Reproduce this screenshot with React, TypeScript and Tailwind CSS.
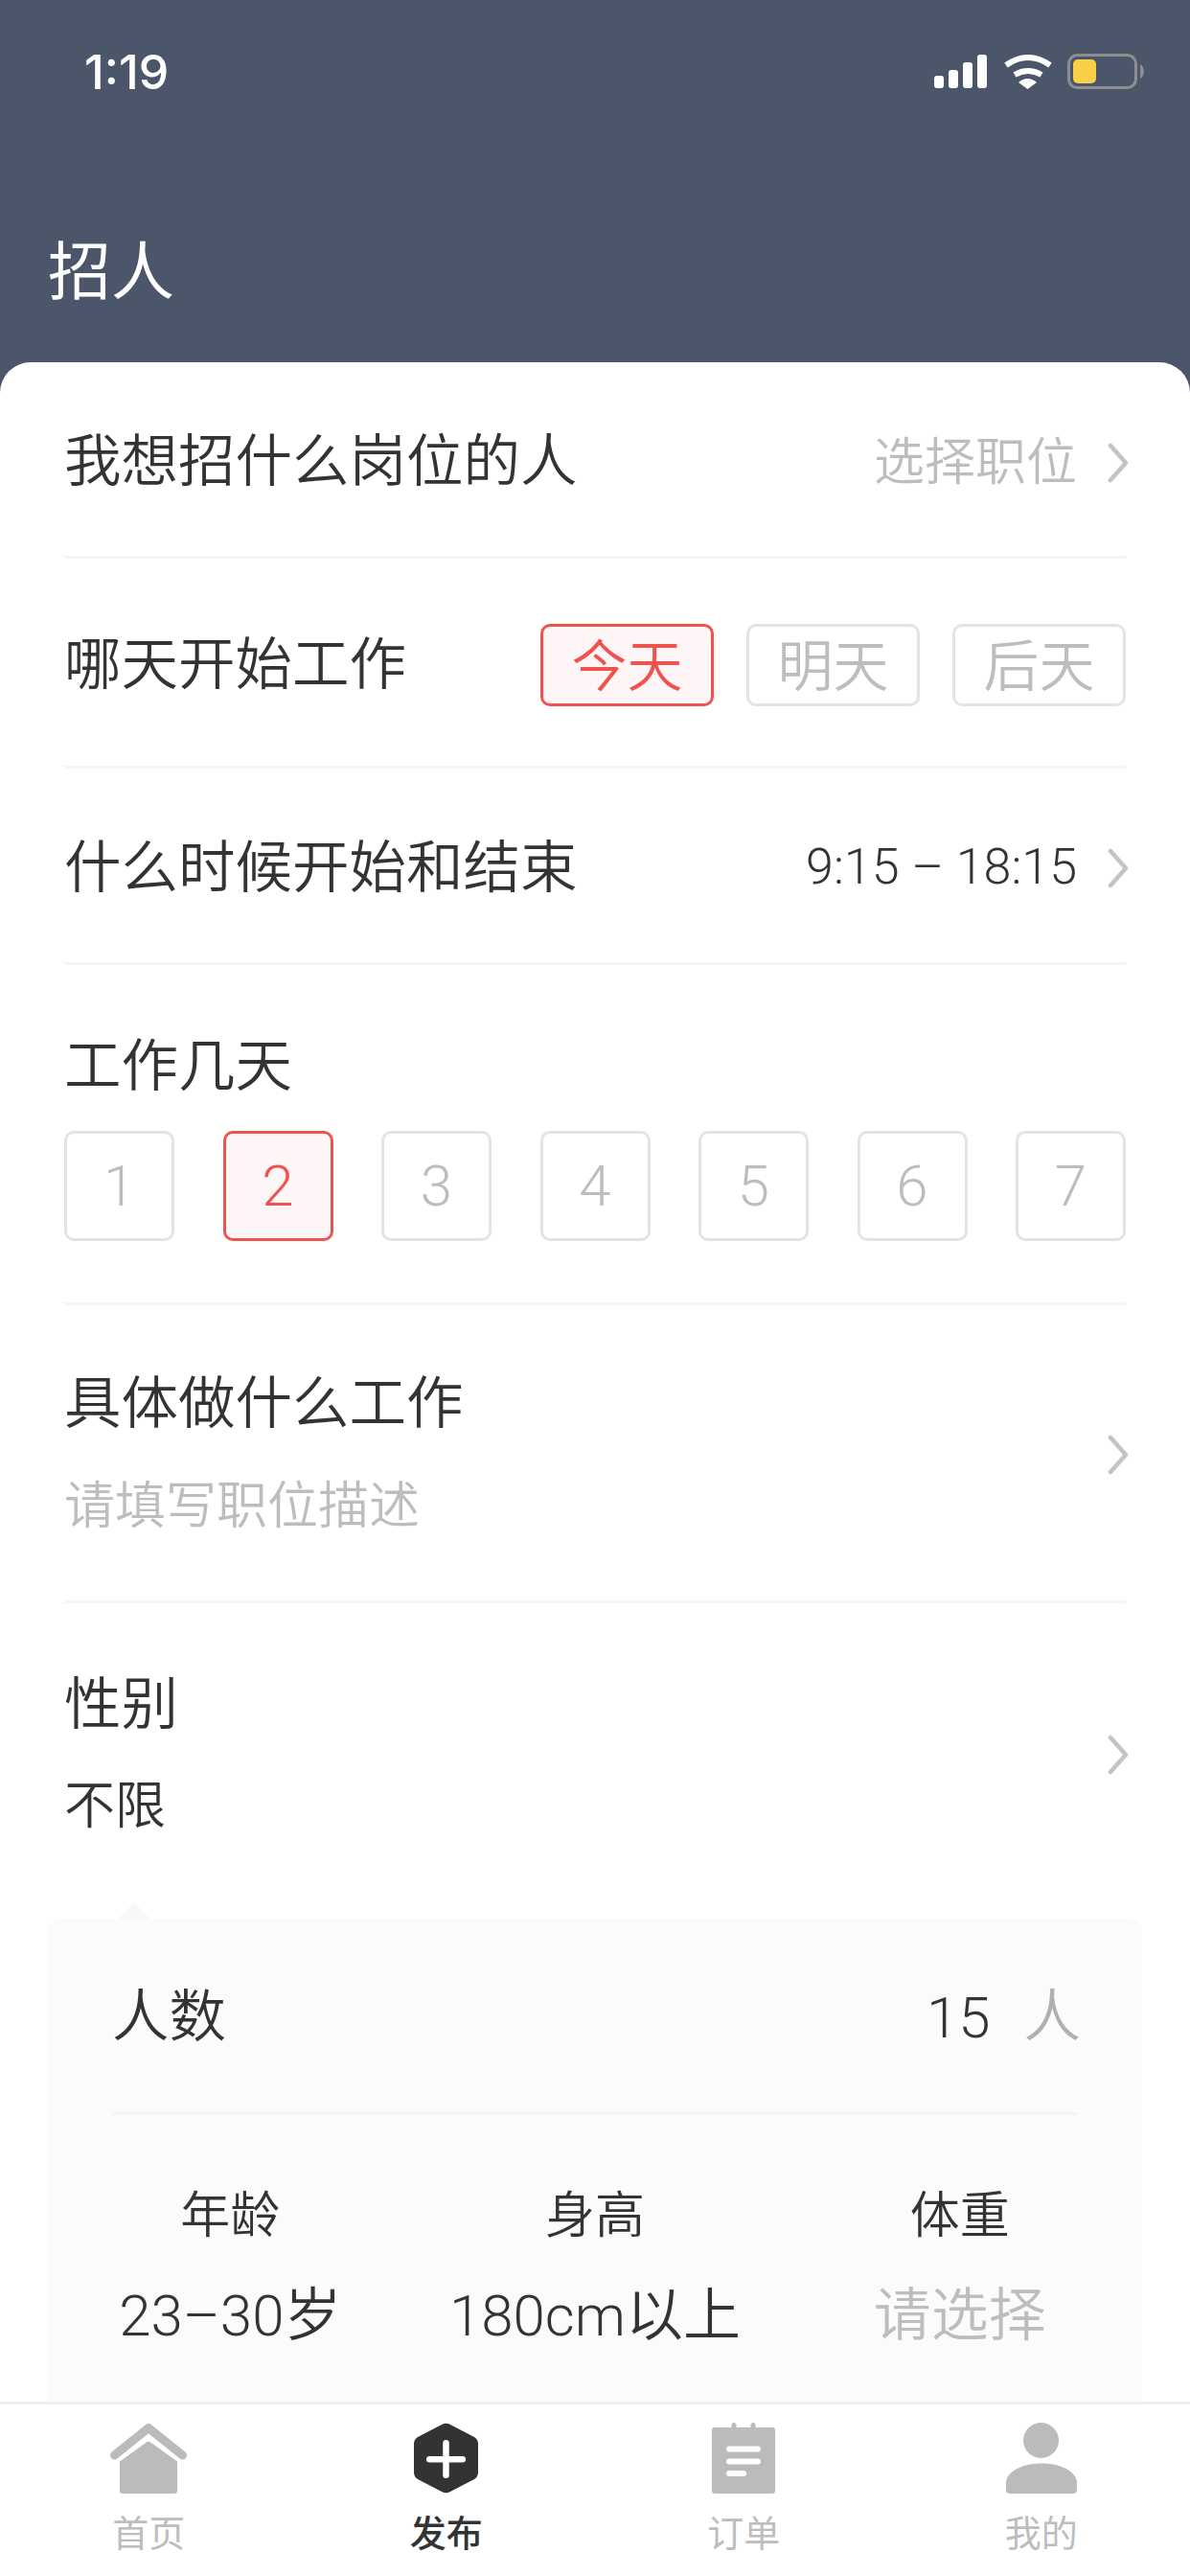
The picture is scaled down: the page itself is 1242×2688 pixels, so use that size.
import React from "react";

function Chevron({ className = "" }: { className?: string }) {
  return (
    <svg width="22" height="42" viewBox="0 0 22 42" className={className} fill="none" stroke="#c4c4c4" strokeWidth="4.5">
      <path d="M3 3 L19 21 L3 39" strokeLinecap="round" strokeLinejoin="round" />
    </svg>
  );
}

function Signal() {
  return (
    <svg width="55" height="36" viewBox="0 0 55 36" fill="#fff">
      <rect x="0" y="22" width="10" height="13" rx="3" />
      <rect x="15" y="16" width="10" height="19" rx="3" />
      <rect x="30" y="8" width="10" height="27" rx="3" />
      <rect x="45" y="0" width="10" height="35" rx="3" />
    </svg>
  );
}

function Wifi() {
  return (
    <svg width="52" height="37" viewBox="0 0 52 37" fill="none">
      <path d="M3 11 Q26 -5 49 11" stroke="#fff" strokeWidth="6" />
      <path d="M12 21 Q26 13 40 21" stroke="#fff" strokeWidth="6" />
      <path d="M16 29 Q25.5 21 35 29 L25.5 36 Z" fill="#fff" />
    </svg>
  );
}

function Battery() {
  return (
    <svg width="80" height="38" viewBox="0 0 80 38" fill="none">
      <rect x="1.5" y="1.5" width="70" height="34" rx="9" stroke="#8e8e8e" strokeWidth="3" />
      <rect x="6" y="6" width="24" height="25" rx="5" fill="#f8d047" />
      <path d="M76 11 Q80 14 80 18.5 Q80 23 76 26 Z" fill="#8e8e8e" />
    </svg>
  );
}

function HomeIcon() {
  return (
    <svg width="80" height="74" viewBox="0 0 80 74" fill="#bbbbbb">
      <path d="M4.5 34 L40 5.5 L75.5 34" fill="none" stroke="#bbbbbb" strokeWidth="9" strokeLinecap="round" strokeLinejoin="round" />
      <path d="M38.5 20 Q40 19 41.5 20 L70 40.5 V71 Q70 74 67 74 H13 Q10 74 10 71 V40.5 Z" />
    </svg>
  );
}

function PublishIcon() {
  return (
    <svg width="67" height="74" viewBox="0 0 67 74">
      <path d="M30 1.5 Q33.5 0 37 1.5 L63 15 Q67 17.5 67 22 V52 Q67 56.5 63 59 L37 72.5 Q33.5 74 30 72.5 L4 59 Q0 56.5 0 52 V22 Q0 17.5 4 15 Z" fill="#333333" />
      <rect x="13" y="35" width="41" height="6.5" rx="3.25" fill="#fff" />
      <rect x="30.25" y="18" width="6.5" height="40" rx="3.25" fill="#fff" />
    </svg>
  );
}

function OrderIcon() {
  return (
    <svg width="66" height="74" viewBox="0 0 66 74" fill="#bbbbbb">
      <rect x="20.5" y="0" width="5" height="10" rx="2.5" />
      <rect x="40.5" y="0" width="5" height="10" rx="2.5" />
      <rect x="0" y="5" width="66" height="69" rx="3" />
      <rect x="15" y="24.5" width="36" height="6" rx="3" fill="#fff" />
      <rect x="15" y="37.5" width="36" height="6" rx="3" fill="#fff" />
      <rect x="15" y="50" width="21" height="6" rx="3" fill="#fff" />
    </svg>
  );
}

function MineIcon() {
  return (
    <svg width="74" height="74" viewBox="0 0 74 74" fill="#bbbbbb">
      <circle cx="36.5" cy="18.5" r="18.5" />
      <path d="M0 70 V63 C0 51 17 42.5 37 42.5 C57 42.5 74 51 74 63 V70 Q74 74 70 74 H4 Q0 74 0 70 Z" />
    </svg>
  );
}

function Tag({ label, active }: { label: string; active?: boolean }) {
  return (
    <div
      className={
        active
          ? "w-[181px] h-[86px] pt-[4px] flex items-center justify-center rounded-[10px] border-[3px] border-[#ef5350] bg-[#fef5f6] text-[#ef5350] text-[58px] leading-none"
          : "w-[181px] h-[86px] pt-[4px] flex items-center justify-center rounded-[10px] border-[3px] border-[#e4e4e4] bg-white text-[#bdbdbd] text-[58px] leading-none"
      }
    >
      {label}
    </div>
  );
}

function Day({ label, active }: { label: string; active?: boolean }) {
  return (
    <div
      className={
        active
          ? "w-[115px] h-[115px] flex items-center justify-center rounded-[10px] border-[3px] border-[#ef5350] bg-[#fef5f6] text-[#ef5350] text-[60px] leading-none"
          : "w-[115px] h-[115px] flex items-center justify-center rounded-[10px] border-[3px] border-[#e4e4e4] bg-white text-[#bdbdbd] text-[60px] leading-none"
      }
    >
      {label}
    </div>
  );
}

function Tab({ icon, label, active }: { icon: React.ReactNode; label: string; active?: boolean }) {
  return (
    <div className="flex flex-col items-center">
      <div className="h-[74px] flex items-end">{icon}</div>
      <div className={active ? "mt-[20px] text-[38px] leading-[44px] text-[#333333] font-medium" : "mt-[20px] text-[38px] leading-[44px] text-[#bdbdbd]"}>
        {label}
      </div>
    </div>
  );
}

export default function App() {
  return (
    <div className="w-[1242px] h-[2688px] overflow-hidden flex flex-col bg-[#4c566a] font-[family-name:Roboto,'Noto_Sans_CJK_SC',sans-serif]">
      <header className="h-[378px] shrink-0 flex flex-col">
        <div className="h-[38px] mt-[56px] pl-[88px] pr-[48px] flex items-center justify-between">
          <span className="font-[family-name:Inter,sans-serif] text-[50px] leading-none font-medium text-white">1:19</span>
          <div className="flex items-center">
            <Signal />
            <div className="ml-[17px]"><Wifi /></div>
            <div className="ml-[15px]"><Battery /></div>
          </div>
        </div>
        <h1 className="mt-[151px] pl-[50px] text-[66px] leading-[80px] font-normal text-white">招人</h1>
      </header>

      <main className="flex-1 min-h-0 overflow-hidden bg-white rounded-t-[32px] text-[#333333] font-[350]">
        <div className="mx-[67px]">
          <div className="h-[205px] flex items-center justify-between border-b-[3px] border-[#f5f5f5]">
            <span className="pt-[8px] text-[59.5px] leading-none">我想招什么岗位的人</span>
            <div className="flex items-center gap-[32px] mr-[-3px]">
              <span className="pt-[8px] text-[53px] leading-none text-[#bdbdbd]">选择职位</span>
              <Chevron className="mt-[8px]" />
            </div>
          </div>

          <div className="h-[219px] flex items-center justify-between border-b-[3px] border-[#f5f5f5]">
            <span className="pt-[8px] text-[59.5px] leading-none">哪天开始工作</span>
            <div className="flex gap-[34px] pt-[5px]">
              <Tag label="今天" active />
              <Tag label="明天" />
              <Tag label="后天" />
            </div>
          </div>

          <div className="h-[205px] flex items-center justify-between border-b-[3px] border-[#f5f5f5]">
            <span className="pt-[8px] text-[59.5px] leading-none">什么时候开始和结束</span>
            <div className="flex items-center gap-[32px] mr-[-3px]">
              <span className="pt-[4px] text-[52px] leading-none">9:15 – 18:15</span>
              <Chevron className="mt-[6px]" />
            </div>
          </div>

          <div className="h-[355px] pt-[71px] border-b-[3px] border-[#f5f5f5]">
            <div className="text-[59.5px] leading-[70px]">工作几天</div>
            <div className="mt-[32px] flex justify-between">
              <Day label="1" />
              <Day label="2" active />
              <Day label="3" />
              <Day label="4" />
              <Day label="5" />
              <Day label="6" />
              <Day label="7" />
            </div>
          </div>

          <div className="h-[311px] flex items-center justify-between border-b-[3px] border-[#f5f5f5]">
            <div className="flex flex-col pt-[2px]">
              <span className="text-[59.5px] leading-[70px]">具体做什么工作</span>
              <span className="mt-[40px] text-[53px] leading-[64px] text-[#bdbdbd]">请填写职位描述</span>
            </div>
            <Chevron className="mr-[-3px] mt-[3px]" />
          </div>

          <div className="h-[329px] pt-[71px] flex items-start justify-between">
            <div className="flex flex-col">
              <span className="text-[59.5px] leading-[70px]">性别</span>
              <span className="mt-[39px] text-[53px] leading-[64px]">不限</span>
            </div>
            <Chevron className="mr-[-3px] mt-[66px]" />
          </div>
        </div>

        <div className="mx-[50px] relative rounded-[14px] bg-[#fbfbfb] pb-[100px]">
          <div className="absolute left-[73px] top-[-17px] w-0 h-0 border-x-[17px] border-x-transparent border-b-[17px] border-b-[#f8f8f8]" />
          <div className="mx-[67px] h-[205px] flex items-center justify-between border-b-[3px] border-[#f4f4f4]">
            <span className="pt-[5px] text-[59.5px] leading-none">人数</span>
            <div className="flex items-center gap-[35px] mr-[-3px] pt-[5px]">
              <span className="text-[60px] leading-none">15</span>
              <span className="text-[59.5px] leading-none text-[#b0b0b0]">人</span>
            </div>
          </div>
          <div className="mt-[74px] grid grid-cols-3 text-center">
            <div>
              <div className="text-[52px] leading-[64px]">年龄</div>
              <div className="mt-[37px] text-[60px] leading-[70px]">23–30岁</div>
            </div>
            <div>
              <div className="text-[52px] leading-[64px]">身高</div>
              <div className="mt-[37px] text-[60px] leading-[70px]">180cm以上</div>
            </div>
            <div>
              <div className="text-[52px] leading-[64px]">体重</div>
              <div className="mt-[37px] text-[60px] leading-[70px] text-[#bdbdbd]">请选择</div>
            </div>
          </div>
        </div>
      </main>

      <nav className="h-[182px] shrink-0 bg-white border-t-[3px] border-[#efefef] pt-[19px] grid grid-cols-4">
        <Tab icon={<HomeIcon />} label="首页" />
        <Tab icon={<PublishIcon />} label="发布" active />
        <Tab icon={<OrderIcon />} label="订单" />
        <Tab icon={<MineIcon />} label="我的" />
      </nav>
    </div>
  );
}
